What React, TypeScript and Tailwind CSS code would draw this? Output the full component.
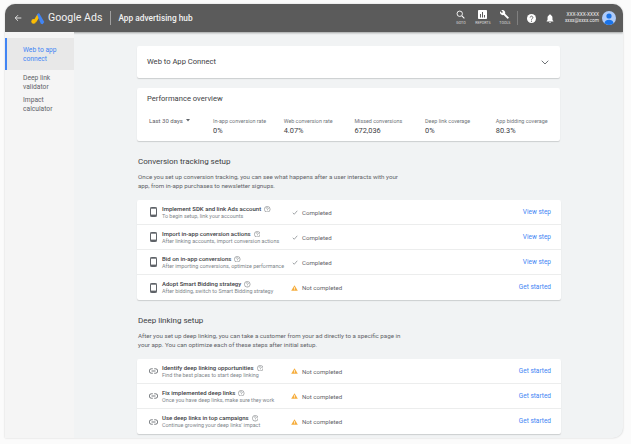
import React from "react";

const font = { fontFamily: '"Roboto", "Liberation Sans", sans-serif' };

function Phone() {
  return (
    <svg width="7" height="10" viewBox="0 0 7 10" className="shrink-0">
      <rect x="0.5" y="0.5" width="6" height="9" rx="0.8" fill="none" stroke="#5f6368" strokeWidth="1" />
      <rect x="0.5" y="7.6" width="6" height="1.9" fill="#5f6368" />
      <rect x="0.5" y="0.5" width="6" height="1.2" fill="#5f6368" />
    </svg>
  );
}

function LinkIcon() {
  return (
    <svg width="9" height="6" viewBox="0 0 18 12" className="shrink-0">
      <path d="M7.5 1.5H5a4.500 4.500 0 0 0 0 9h2.500M10.500 1.500H13a4.500 4.500 0 0 1 0 9h-2.500" fill="none" stroke="#5f6368" strokeWidth="1.700" />
      <path d="M5 6H13" stroke="#5f6368" strokeWidth="1.700" />
    </svg>
  );
}

function Help() {
  return (
    <svg width="6.5" height="6.5" viewBox="0 0 12 12" className="mt-[1px] shrink-0">
      <circle cx="6" cy="6" r="5.300" fill="none" stroke="#5f6368" strokeWidth="0.9" />
      <path d="M4.400 4.800a1.600 1.600 0 1 1 2.500 1.300c-.6.400-.9.700-.9 1.300" fill="none" stroke="#5f6368" strokeWidth="0.9" />
      <circle cx="6" cy="9" r=".6" fill="#5f6368" />
    </svg>
  );
}

function Check() {
  return (
    <svg width="6" height="5" viewBox="0 0 12 10">
      <path d="M1.500 5.500 4.500 8.500 10.500 1.500" fill="none" stroke="#70757a" strokeWidth="1.300" />
    </svg>
  );
}

function Warn() {
  return (
    <svg width="7" height="6" viewBox="0 0 16 14">
      <path d="M8 0.500 15.800 13.500H0.200Z" fill="#f6ad3c" />
      <rect x="7.200" y="5" width="1.600" height="4.500" fill="#fff" />
      <rect x="7.200" y="10.300" width="1.600" height="1.600" fill="#fff" />
    </svg>
  );
}

function Row({ icon, title, sub, done, last }: { icon: React.ReactNode; title: string; sub: string; done: boolean; last?: boolean }) {
  return (
    <div className={`flex h-[25px] items-center pl-[10px] pr-[10px] ${last ? "" : "border-b border-[#eceded]"}`}>
      <div className="flex w-[13px] justify-center">{icon}</div>
      <div className="ml-[2px] w-[129px] shrink-0">
        <div className="flex items-center gap-[3px] whitespace-nowrap text-[6px] font-medium leading-[8px] text-[#3c4043]">
          {title}
          <Help />
        </div>
        <div className="whitespace-nowrap text-[5.4px] leading-[7px] text-[#80868b]">{sub}</div>
      </div>
      <div className="mt-[1px] flex items-center">
        <div className="flex w-[7px] justify-center">{done ? <Check /> : <Warn />}</div>
        <span className="ml-[4px] text-[6.1px] text-[#5f6368]">{done ? "Completed" : "Not completed"}</span>
      </div>
      <span className="ml-auto mt-[1px] text-[6.5px] text-[#4285f4]">{done ? "View step" : "Get started"}</span>
    </div>
  );
}

function Metric({ label, value, width }: { label: string; value: string; width: string }) {
  return (
    <div className={width}>
      <div className="whitespace-nowrap text-[5.4px] leading-[7px] text-[#70757a]">{label}</div>
      <div className="mt-[1px] text-[7.4px] leading-[9px] text-[#3c4043]">{value}</div>
    </div>
  );
}

export default function App() {
  return (
    <div style={font} className="h-[444px] w-[631px] overflow-hidden bg-[#fbfbfb] pl-[5px] pt-[4px]">
      <div className="flex h-[434px] w-[618px] flex-col overflow-hidden rounded-t-[10px] rounded-br-[10px] bg-[#f1f3f4] shadow-[0_0_2px_rgba(0,0,0,0.2)]">
        <header className="flex h-[28px] shrink-0 items-center bg-[#5b5b5b] pl-[9px] pr-[7px] shadow-[0_1px_2px_rgba(0,0,0,0.35)]">
          <svg width="8" height="8" viewBox="0 0 12 12">
            <path d="M11 6H2M6 1.800 1.800 6 6 10.200" fill="none" stroke="#fff" strokeWidth="1.200" />
          </svg>
          <svg width="14" height="13" viewBox="0 0 14 13" className="ml-[9px]">
            <circle cx="2.600" cy="9.400" r="2.300" fill="#fbbc04" />
            <path d="M3 8 6.400 2.200 8 5.800 5 10.400Z" fill="#fbbc04" />
            <path d="M6 2.200 8 1 13.300 10 11.600 12.200 9.800 11.800Z" fill="#4285f4" />
          </svg>
          <span className="ml-[3px] text-[10.6px] text-[#f1f1f1]">Google Ads</span>
          <div className="ml-[8px] h-[14px] w-px bg-[#a0a0a0]" />
          <span className="ml-[7px] text-[8.3px] font-medium text-[#f1f1f1]">App advertising hub</span>

          <div className="ml-auto flex items-center">
            <div className="flex w-[22px] flex-col items-center">
              <svg width="9" height="9" viewBox="0 0 12 12">
                <circle cx="5" cy="5" r="3.600" fill="none" stroke="#fff" strokeWidth="1.200" />
                <path d="M7.800 7.800 11.200 11.200" stroke="#fff" strokeWidth="1.400" />
              </svg>
              <span className="mt-[2px] whitespace-nowrap text-[3.6px] leading-[5px] text-[#dddddd]">GOTO</span>
            </div>
            <div className="flex w-[22px] flex-col items-center">
              <svg width="9" height="9" viewBox="0 0 9 9">
                <rect width="9" height="9" rx="0.800" fill="#fff" />
                <rect x="2" y="4" width="1" height="3.500" fill="#5b5b5b" />
                <rect x="4" y="2" width="1" height="5.500" fill="#5b5b5b" />
                <rect x="6" y="5" width="1" height="2.500" fill="#5b5b5b" />
              </svg>
              <span className="mt-[2px] whitespace-nowrap text-[3.6px] leading-[5px] text-[#dddddd]">REPORTS</span>
            </div>
            <div className="flex w-[22px] flex-col items-center">
              <svg width="9" height="9" viewBox="0 0 12 12">
                <path d="M11.500 9.600 6.800 4.900C7.200 3.400 6.900 2 5.800 1 4.700-.1 3.100-.3 1.800.3l2.200 2.200L2.500 4 .3 1.800C-.3 3.100 0 4.700 1 5.800c1 1 2.400 1.300 3.900.9l4.700 4.700c.4.400.9.400 1.300 0l.6-.6c.4-.3.400-.9 0-1.200Z" fill="#fff" />
              </svg>
              <span className="mt-[2px] whitespace-nowrap text-[3.6px] leading-[5px] text-[#dddddd]">TOOLS</span>
            </div>
            <div className="ml-[1px] h-[14px] w-px bg-[#808080]" />
            <svg width="9" height="9" viewBox="0 0 12 12" className="ml-[9px]">
              <circle cx="6" cy="6" r="6" fill="#fff" />
              <path d="M4.200 4.700a1.800 1.800 0 1 1 2.800 1.500c-.7.500-1 .8-1 1.500" fill="none" stroke="#5b5b5b" strokeWidth="1.200" />
              <circle cx="6" cy="9.500" r=".8" fill="#5b5b5b" />
            </svg>
            <svg width="8" height="9" viewBox="0 0 12 13" className="ml-[10px]">
              <path d="M6 0.500C4.900.5 4.500 1.200 4.500 1.800 2.900 2.400 2.300 3.800 2.300 5.500V8.800L1 10.200V11H11V10.200L9.700 8.800V5.500C9.700 3.800 9.100 2.400 7.500 1.800 7.500 1.200 7.100.5 6 .5Z" fill="#fff" />
              <path d="M4.700 11.700a1.300 1.300 0 0 0 2.600 0Z" fill="#fff" />
            </svg>
            <div className="ml-[11px] flex flex-col items-end">
              <span className="text-[4.8px] leading-[6px] text-[#eeeeee]">XXX-XXX-XXXX</span>
              <span className="text-[4.8px] leading-[6px] text-[#eeeeee]">xxxx@xxxx.com</span>
            </div>
            <svg width="14" height="14" viewBox="0 0 14 14" className="ml-[3px]">
              <circle cx="7" cy="7" r="7" fill="#aecbfa" />
              <circle cx="7" cy="5" r="2.600" fill="#1a73e8" />
              <path d="M2.400 12.200C3 9.800 4.800 8.800 7 8.800s4 1 4.600 3.400A7 7 0 0 1 7 14a7 7 0 0 1-4.600-1.800Z" fill="#1a73e8" />
            </svg>
          </div>
        </header>

        <div className="flex min-h-0 flex-1">
          <aside className="w-[69px] shrink-0 bg-[#f5f5f5] pt-[6px]">
            <div className="flex h-[32px] flex-col justify-center border-l-2 border-[#4285f4] bg-[#e8e8e8] pl-[16px] pt-[2px] text-[6.7px] leading-[9px] text-[#4285f4]">
              <span>Web to app</span>
              <span>connect</span>
            </div>
            <div className="mt-[3.500px] pl-[18px] text-[6.700px] leading-[9px] text-[#5f6368]">
              <div>Deep link</div>
              <div>validator</div>
              <div className="mt-[4.500px]">Impact</div>
              <div>calculator</div>
            </div>
          </aside>

          <main className="ml-[63px] w-[424px] pt-[14px]">
            <section className="flex h-[32px] w-[423px] items-center justify-between rounded-[2px] bg-white pl-[10px] pr-[11px] shadow-[0_1px_1px_rgba(60,64,67,0.2)]">
              <span className="text-[7.600px] text-[#3c4043]">Web to App Connect</span>
              <svg width="8" height="5" viewBox="0 0 8 5">
                <path d="M.7.7 4 4 7.300.7" fill="none" stroke="#5f6368" strokeWidth="0.9" />
              </svg>
            </section>

            <section className="mt-[10px] h-[53px] w-[423px] rounded-[2px] bg-white pl-[10px] pt-[5px] shadow-[0_1px_1px_rgba(60,64,67,0.2)]">
              <h2 className="text-[7.600px] font-normal leading-[11px] text-[#3c4043]">Performance overview</h2>
              <div className="mt-[13.500px] flex">
                <div className="-mt-[1px] flex h-[7px] w-[66px] items-start pl-[2px] text-[6px] leading-[7px] text-[#5f6368]">
                  Last 30 days
                  <svg width="4" height="3" viewBox="0 0 4 3" className="ml-[3px] mt-[2px]">
                    <path d="M0 0H4L2 2.500Z" fill="#5f6368" />
                  </svg>
                </div>
                <Metric label="In-app conversion rate" value="0%" width="w-[70.700px]" />
                <Metric label="Web conversion rate" value="4.07%" width="w-[70.700px]" />
                <Metric label="Missed conversions" value="672,036" width="w-[70.700px]" />
                <Metric label="Deep link coverage" value="0%" width="w-[70.700px]" />
                <Metric label="App bidding coverage" value="80.3%" width="w-[60px]" />
              </div>
            </section>

            <h2 className="mt-[15px] pl-[1px] text-[8px] font-normal leading-[11px] text-[#3c4043]">Conversion tracking setup</h2>
            <p className="mt-[6px] pl-[1px] text-[6.200px] leading-[9px] text-[#5f6368]">
              Once you set up conversion tracking, you can see what happens after a user interacts with your<br />
              app, from in-app purchases to newsletter signups.
            </p>
            <section className="mt-[9px] rounded-[2px] bg-white shadow-[0_1px_1px_rgba(60,64,67,0.2)]">
              <Row icon={<Phone />} title="Implement SDK and link Ads account" sub="To begin setup, link your accounts" done />
              <Row icon={<Phone />} title="Import in-app conversion actions" sub="After linking accounts, import conversion actions" done />
              <Row icon={<Phone />} title="Bid on in-app conversions" sub="After importing conversions, optimize performance" done />
              <Row icon={<Phone />} title="Adopt Smart Bidding strategy" sub="After bidding, switch to Smart Bidding strategy" done={false} last />
            </section>

            <h2 className="mt-[15px] pl-[1px] text-[8px] font-normal leading-[11px] text-[#3c4043]">Deep linking setup</h2>
            <p className="mt-[6px] pl-[1px] text-[6.200px] leading-[9px] text-[#5f6368]">
              After you set up deep linking, you can take a customer from your ad directly to a specific page in<br />
              your app. You can optimize each of these steps after initial setup.
            </p>
            <section className="mt-[9px] rounded-[2px] bg-white shadow-[0_1px_1px_rgba(60,64,67,0.2)]">
              <Row icon={<LinkIcon />} title="Identify deep linking opportunities" sub="Find the best places to start deep linking" done={false} />
              <Row icon={<LinkIcon />} title="Fix implemented deep links" sub="Once you have deep links, make sure they work" done={false} />
              <Row icon={<LinkIcon />} title="Use deep links in top campaigns" sub="Continue growing your deep links' impact" done={false} last />
            </section>
          </main>
        </div>
      </div>
    </div>
  );
}
